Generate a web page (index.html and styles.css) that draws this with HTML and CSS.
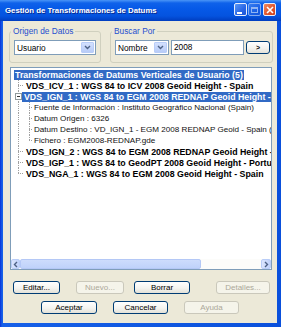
FILE: index.html
```html
<!DOCTYPE html>
<html lang="es">
<head>
    <meta charset="UTF-8">
    <meta name="viewport" content="width=device-width, initial-scale=1.0">
    <title>Gestión de Transformaciones de Datums</title>
    <link rel="stylesheet" href="styles.css">
</head>
<body>
    <div class="window">
        <div class="titlebar">
            <span class="title">Gestión de Transformaciones de Datums</span>
            <div class="controls">
                <span class="ctl min"><span class="bar"></span></span>
                <span class="ctl max"><span class="box"></span></span>
                <span class="ctl close">
                    <svg width="8" height="8" viewBox="0 0 8 8"><path d="M1 1L7 7M7 1L1 7" stroke="#fff" stroke-width="1.6"/></svg>
                </span>
            </div>
        </div>

        <div class="client">
            <div class="filters">
                <fieldset class="group origin">
                    <legend>Origen de Datos</legend>
                    <div class="group-body">
                        <div class="combo wide">
                            <span class="value">Usuario</span>
                            <span class="drop"><svg width="7" height="5" viewBox="0 0 7 5"><path d="M1 1l2.5 2.5L6 1" fill="none" stroke="#4d6185" stroke-width="1.4"/></svg></span>
                        </div>
                    </div>
                </fieldset>
                <fieldset class="group search">
                    <legend>Buscar Por</legend>
                    <div class="group-body">
                        <div class="combo narrow">
                            <span class="value">Nombre</span>
                            <span class="drop"><svg width="7" height="5" viewBox="0 0 7 5"><path d="M1 1l2.5 2.5L6 1" fill="none" stroke="#4d6185" stroke-width="1.4"/></svg></span>
                        </div>
                        <div class="textbox">2008</div>
                        <button class="btn go">&gt;</button>
                    </div>
                </fieldset>
            </div>

            <div class="tree">
                <div class="tree-rows">
                    <div class="row">
                        <span class="label strong selected root">Transformaciones de Datums Verticales de Usuario (5)</span>
                    </div>
                    <div class="row">
                        <span class="guide tee"></span>
                        <span class="label strong">VDS_ICV_1 : WGS 84 to ICV 2008 Geoid Height - Spain</span>
                    </div>
                    <div class="row">
                        <span class="guide tee"><span class="expander"></span></span>
                        <span class="label strong selected current">VDS_IGN_1 : WGS 84 to EGM 2008 REDNAP Geoid Height - Spain</span>
                    </div>
                    <div class="row">
                        <span class="guide pipe"></span>
                        <span class="guide small tee"></span>
                        <span class="label">Fuente de Información : Instituto Geográfico Nacional (Spain)</span>
                    </div>
                    <div class="row">
                        <span class="guide pipe"></span>
                        <span class="guide small tee"></span>
                        <span class="label">Datum Origen : 6326</span>
                    </div>
                    <div class="row">
                        <span class="guide pipe"></span>
                        <span class="guide small tee"></span>
                        <span class="label">Datum Destino : VD_IGN_1 - EGM 2008 REDNAP Geoid - Spain (EPSG)</span>
                    </div>
                    <div class="row">
                        <span class="guide pipe"></span>
                        <span class="guide small elbow"></span>
                        <span class="label">Fichero : EGM2008-REDNAP.gde</span>
                    </div>
                    <div class="row">
                        <span class="guide tee"></span>
                        <span class="label strong">VDS_IGN_2 : WGS 84 to EGM 2008 REDNAP Geoid Height - Spain</span>
                    </div>
                    <div class="row">
                        <span class="guide tee"></span>
                        <span class="label strong">VDS_IGP_1 : WGS 84 to GeodPT 2008 Geoid Height - Portugal</span>
                    </div>
                    <div class="row">
                        <span class="guide elbow"></span>
                        <span class="label strong">VDS_NGA_1 : WGS 84 to EGM 2008 Geoid Height - Spain</span>
                    </div>
                </div>
                <div class="hscroll">
                    <span class="arrow left"><svg width="6" height="7" viewBox="0 0 6 7"><path d="M4 1L1.5 3.5L4 6" fill="none" stroke="#4d6185" stroke-width="1.4"/></svg></span>
                    <div class="track"><span class="thumb"></span></div>
                    <span class="arrow right"><svg width="6" height="7" viewBox="0 0 6 7"><path d="M2 1l2.5 2.5L2 6" fill="none" stroke="#4d6185" stroke-width="1.4"/></svg></span>
                </div>
            </div>

            <div class="actions first">
                <button class="btn edit">Editar...</button>
                <button class="btn new" disabled>Nuevo...</button>
                <button class="btn delete">Borrar</button>
                <button class="btn details" disabled>Detalles...</button>
            </div>
            <div class="actions second">
                <button class="btn ok">Aceptar</button>
                <button class="btn cancel">Cancelar</button>
                <button class="btn help" disabled>Ayuda</button>
            </div>
        </div>
    </div>
</body>
</html>
```

FILE: styles.css
```css
* {
    box-sizing: border-box;
}
body {
    margin: 0;
    font-family: "Liberation Sans", Arial, sans-serif;
    background: #fff;
}
.window {
    width: 281px;
    height: 327px;
    background: linear-gradient(90deg, #0831d9 0, #1660e8 2px, #0a50dc 100%);
    display: flex;
    flex-direction: column;
}

/* title bar */
.titlebar {
    height: 21px;
    flex: none;
    display: flex;
    align-items: center;
    justify-content: space-between;
    padding: 0 5px;
    background: linear-gradient(#4a95f7 0, #0f62ea 3px, #0659e7 9px, #0453df 16px, #003dbf 21px);
}
.title {
    color: #fff;
    font-size: 7.8px;
    font-weight: bold;
    text-shadow: 1px 1px 0 #0a2a8e;
}
.controls {
    display: flex;
    gap: 1px;
    margin-top: -2px;
}
.ctl {
    width: 13px;
    height: 13px;
    border: 1px solid #e8eefc;
    border-radius: 2px;
    display: flex;
    align-items: center;
    justify-content: center;
    background: linear-gradient(135deg, #5a98f6, #2966e6 60%, #1d55d6);
}
.ctl.max {
    opacity: 0.55;
}
.ctl.close {
    margin-left: 1px;
    background: linear-gradient(135deg, #f08a60, #e0542c 60%, #c8401c);
}
.ctl .bar {
    width: 5px;
    height: 2px;
    background: #fff;
    margin: 6px 3px 0 0;
}
.ctl .box {
    width: 7px;
    height: 6px;
    border: 1px solid #fff;
    border-top-width: 2px;
}

/* client area */
.client {
    flex: 1;
    margin: 0 4px 4px 3px;
    padding-top: 5px;
    background: #ece9d8;
    display: flex;
    flex-direction: column;
}
.filters {
    display: flex;
    gap: 9px;
    margin-left: 6px;
}
.group {
    margin: 0;
    padding: 4px 4px 7px 4px;
    border: 1px solid #d0d0bf;
    border-radius: 3px;
    min-width: 0;
}
.group.origin {
    width: 92px;
}
.group.search {
    width: 163px;
    padding-right: 2px;
}
.group legend {
    padding: 0 2px;
    margin-left: -3px;
    font-size: 8.3px;
    line-height: 10px;
    color: #1f4fcf;
}
.group-body {
    display: flex;
    align-items: center;
    gap: 2px;
}
.combo {
    height: 15px;
    border: 1px solid #7f9db9;
    background: #fff;
    display: flex;
    align-items: center;
    padding-right: 1px;
}
.combo.wide {
    width: 83px;
}
.combo.narrow {
    width: 54px;
}
.combo .value {
    flex: 1;
    padding-left: 2px;
    font-size: 8.3px;
}
.drop {
    width: 13px;
    height: 11px;
    border: 1px solid #b9cdf8;
    border-radius: 1px;
    background: linear-gradient(#d3e0fd, #b8ccf8);
    display: flex;
    align-items: center;
    justify-content: center;
}
.textbox {
    width: 73px;
    height: 15px;
    border: 1px solid #7f9db9;
    background: #fff;
    padding-left: 2px;
    font-size: 8.3px;
    line-height: 13px;
}

/* buttons */
.btn {
    height: 13px;
    padding: 0;
    border: 1px solid #003c74;
    border-radius: 3px;
    background: linear-gradient(#fff, #f4f4f0 55%, #e3e1d8);
    font-family: "Liberation Sans", Arial, sans-serif;
    font-size: 8px;
    line-height: 11px;
    color: #000;
}
.btn:disabled {
    border-color: #cac8bb;
    background: #f5f4ea;
    color: #aca899;
}
.btn.go {
    width: 24px;
    height: 13px;
    font-weight: bold;
    font-size: 7px;
}

/* tree view */
.tree {
    margin: 4px 0 0 7px;
    width: 262px;
    height: 203px;
    border: 1px solid #7f9db9;
    background: #fff;
    display: flex;
    flex-direction: column;
}
.tree-rows {
    flex: 1;
    overflow: hidden;
    padding: 1px 0 0 2px;
    white-space: nowrap;
}
.row {
    height: 11px;
    display: flex;
    align-items: center;
}
.label {
    height: 10px;
    line-height: 10px;
    padding: 0 2px;
    font-size: 8.1px;
    color: #111;
}
.label.strong {
    font-size: 8.8px;
    font-weight: bold;
    color: #000;
}
.label.selected {
    background: #316ac5;
    color: #fff;
}
.label.root {
    margin-left: 1px;
    padding: 0 1px;
}
.label.current {
    margin-left: -2px;
}
.guide {
    flex: none;
    width: 11px;
    height: 11px;
    background-repeat: no-repeat;
}
.guide.small {
    width: 8px;
}
.tee,
.elbow {
    background-image:
        repeating-linear-gradient(to bottom, #a0a0a0 0 1px, transparent 1px 2px),
        repeating-linear-gradient(to right, #a0a0a0 0 1px, transparent 1px 2px);
    background-position: 5px 0, 5px 5px;
    background-size: 1px 11px, 6px 1px;
}
.elbow {
    background-size: 1px 6px, 6px 1px;
}
.pipe {
    background-image: repeating-linear-gradient(to bottom, #a0a0a0 0 1px, transparent 1px 2px);
    background-position: 5px 0;
    background-size: 1px 11px;
}
.guide.tee:has(.expander) {
    display: flex;
    align-items: center;
}
.expander {
    width: 7px;
    height: 7px;
    margin-left: 2px;
    border: 1px solid #919b9c;
    background: #fff linear-gradient(#333, #333) no-repeat center / 3px 1px;
}

/* horizontal scrollbar */
.hscroll {
    height: 10px;
    flex: none;
    display: flex;
    background: #fcfcfa;
}
.arrow {
    width: 9px;
    height: 10px;
    border: 1px solid #b9cdf8;
    border-radius: 2px;
    background: linear-gradient(90deg, #dbe5fd, #c0d2fb);
    display: flex;
    align-items: center;
    justify-content: center;
}
.arrow.right {
    width: 10px;
}
.track {
    flex: 1;
    display: flex;
}
.thumb {
    width: 181px;
    height: 100%;
    border: 1px solid #b4c8f6;
    border-radius: 2px;
    background: linear-gradient(#cddcfc, #bfd2fa);
}

/* dialog buttons */
.actions {
    display: flex;
    flex: none;
}
.actions.first {
    margin-top: 11px;
    padding-left: 10px;
}
.actions.second {
    margin-top: 7px;
    justify-content: center;
    gap: 16px;
}
.btn.edit {
    width: 47px;
}
.btn.new {
    width: 48px;
    margin-left: 16px;
}
.btn.delete {
    width: 56px;
    margin-left: 10px;
}
.btn.details {
    width: 54px;
    margin-left: 26px;
}
.btn.ok {
    width: 56px;
}
.btn.cancel,
.btn.help {
    width: 55px;
}
```
